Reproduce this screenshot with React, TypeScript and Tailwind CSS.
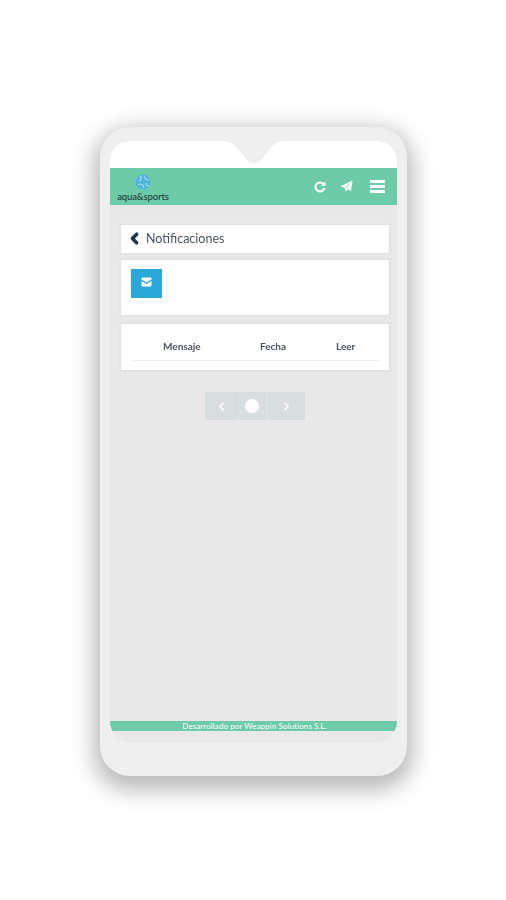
import { ChevronLeft, ChevronRight } from "lucide-react";

function Logo() {
  return (
    <div className="flex flex-col items-center w-[50px] -ml-[1px] pt-[1px]">
      <svg width="18" height="18" viewBox="0 0 18 18" className="mb-[1px]">
        <circle cx="9" cy="9" r="7.5" fill="#4fb3dc" />
        <path d="M6 3c2 2 1 4-1 5M11 3c-1 3 1 4 4 4M4 12c3-2 5-1 6 3M12 10c0 2 1 3 3 3" stroke="#a9dcea" strokeWidth="1.2" fill="none" />
      </svg>
      <span className="text-[9.5px] leading-[9px] font-medium text-[#1d3a3a] tracking-[-0.1px] whitespace-nowrap">aqua&amp;sports</span>
    </div>
  );
}

function RefreshIcon() {
  return (
    <svg width="12" height="12" viewBox="0 0 12 12">
      <path d="M9.6 3.2A4.5 4.5 0 1 0 10.4 7" stroke="white" strokeWidth="2" fill="none" />
      <path d="M11.5 0.5V5H7Z" fill="white" />
    </svg>
  );
}

function PlaneIcon() {
  return (
    <svg width="13" height="12" viewBox="0 0 13 12">
      <path d="M12.5 0.5L11 11L7.5 9.3L5.5 11.5L4.8 8L0.5 6.3Z" fill="white" />
      <path d="M10 3L5.5 8" stroke="#6ecba9" strokeWidth="0.8" />
    </svg>
  );
}

function MailIcon() {
  return (
    <svg width="11" height="10" viewBox="0 0 11 10">
      <path d="M0.5 1.5Q0.5 0.5 1.5 0.5H9.5Q10.5 0.5 10.5 1.5V2.5L5.5 5.5L0.5 2.5Z" fill="white" />
      <path d="M0.5 4L5.5 7L10.5 4V8.5Q10.5 9.5 9.5 9.5H1.5Q0.5 9.5 0.5 8.5Z" fill="white" />
    </svg>
  );
}

function Header() {
  return (
    <header className="h-[37px] bg-[#6ecba9] flex items-center pl-[9px] pr-[12px] shrink-0">
      <Logo />
      <div className="ml-auto flex items-center">
        <RefreshIcon />
        <div className="ml-[14px] -mt-px">
          <PlaneIcon />
        </div>
        <div className="ml-[17px] w-[15px] flex flex-col gap-[2px]">
          <div className="h-[3px] bg-white" />
          <div className="h-[3px] bg-white" />
          <div className="h-[3px] bg-white" />
        </div>
      </div>
    </header>
  );
}

export default function App() {
  return (
    <div className="min-h-[900px] bg-white pt-[127px] pl-[100px] font-['Lato','Open_Sans',sans-serif]">
      <div className="w-[307px] h-[649px] rounded-[30px] bg-[#efefef] pt-[14px] px-[10px] shadow-[0_8px_22px_6px_rgba(0,0,0,0.28)] blur-[0.6px]">
        <div className="relative h-[602px] bg-[#e8e8e8] rounded-t-[20px] rounded-b-[22px] overflow-hidden flex flex-col">
          {/* notch */}
          <svg width="66" height="23" viewBox="0 0 66 23" className="absolute top-0 left-[111px]">
            <path d="M0 0H66C58 0 54 2 49 8L41 18C38 21 36 22 33 22C30 22 28 21 25 18L17 8C12 2 8 0 0 0Z" fill="#efefef" />
          </svg>
          <div className="h-[27px] bg-white shrink-0" />
          <Header />

          <main className="flex-1 flex flex-col pl-[10px] pr-[7px] pt-[19px]">
            <div className="h-[30px] bg-white border border-[#e2e2e2] shadow-[0_0_1px_rgba(0,0,0,0.1)] flex items-center pl-[5px] text-[#4a5464] text-[12.5px]">
              <ChevronLeft size={17} strokeWidth={5} className="text-[#1f3550] -mt-[2px]" />
              <span className="ml-[3px]">Notificaciones</span>
            </div>

            <div className="h-[57px] mt-[5px] bg-white border border-[#e2e2e2] shadow-[0_0_1px_rgba(0,0,0,0.1)] pl-[10px] pt-[9px]">
              <div className="w-[31px] h-[29px] bg-[#2aa9d8] flex items-center justify-center pb-[4px]">
                <MailIcon />
              </div>
            </div>

            <div className="h-[48px] mt-[7px] bg-white border border-[#e2e2e2] shadow-[0_0_1px_rgba(0,0,0,0.1)] px-[10px] pt-[16px]">
              <div className="h-[21px] border-b border-[#eeeeee] flex text-[10px] font-bold text-[#4a5464] leading-[12px]">
                <span className="ml-[32px] w-[97px]">Mensaje</span>
                <span className="w-[76px]">Fecha</span>
                <span>Leer</span>
              </div>
            </div>

            <div className="mt-[21px] self-center mr-[1px] h-[28px] w-[100px] flex bg-[#d8dee0]">
              <div className="w-[33px] flex items-center justify-center">
                <ChevronLeft size={13} strokeWidth={3} className="text-white" />
              </div>
              <div className="w-[30px] border-x border-[#e3e6e7] flex items-center justify-center pr-[2px]">
                <div className="w-[14px] h-[14px] rounded-full bg-white" />
              </div>
              <div className="w-[37px] flex items-center justify-center">
                <ChevronRight size={13} strokeWidth={3} className="text-white" />
              </div>
            </div>
          </main>

          <footer className="h-[10px] mb-[12px] bg-[#6ecba9] text-white text-[8px] leading-[10px] tracking-[0.1px] text-center pl-[2px] shrink-0">
            Desarrollado por Weappin Solutions S.L.
          </footer>
        </div>
      </div>
    </div>
  );
}
